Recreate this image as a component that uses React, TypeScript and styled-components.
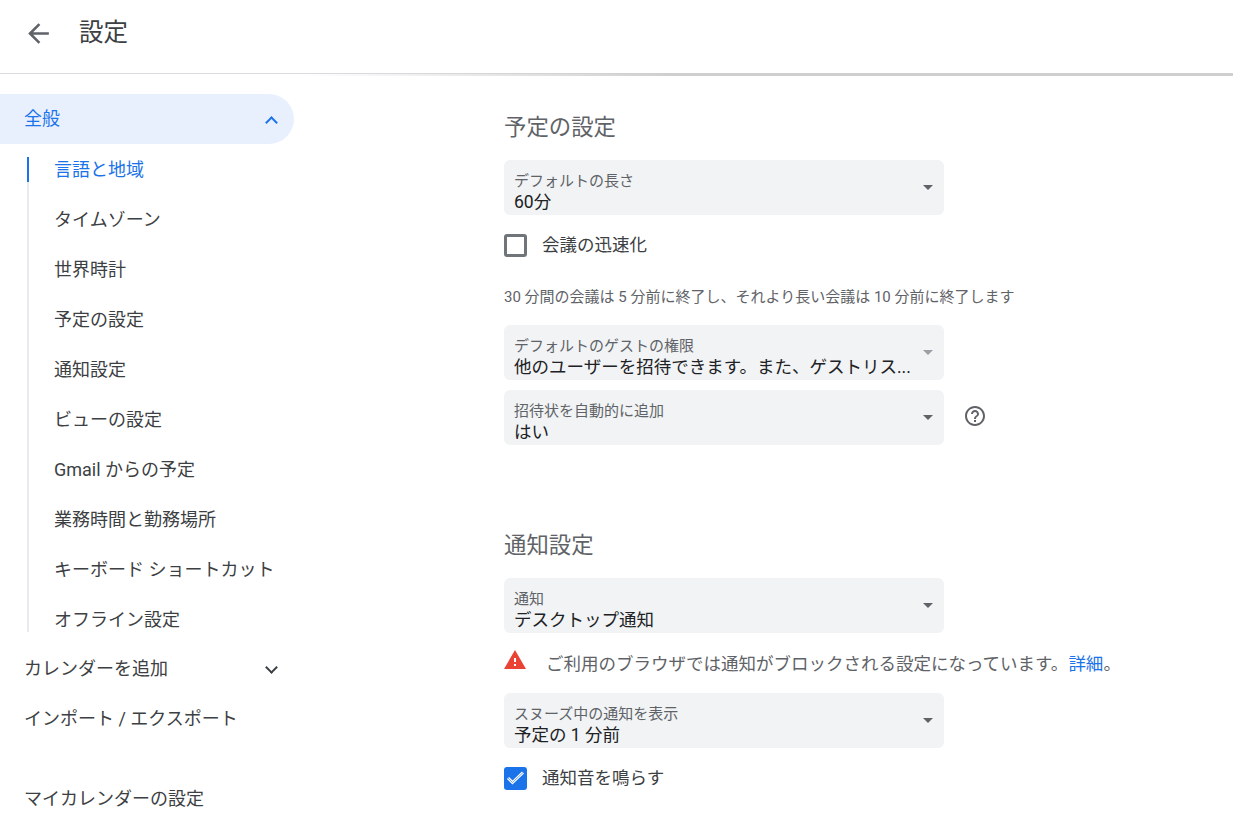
import React from 'react';
import styled, { createGlobalStyle } from 'styled-components';

const GlobalStyle = createGlobalStyle`
  html, body {
    margin: 0;
    padding: 0;
    background: #fff;
  }
  body {
    font-family: Roboto, "Noto Sans CJK JP", "Liberation Sans", sans-serif;
    color: #3c4043;
  }
  * {
    box-sizing: border-box;
  }
`;

const subItems = [
  '言語と地域',
  'タイムゾーン',
  '世界時計',
  '予定の設定',
  '通知設定',
  'ビューの設定',
  'Gmail からの予定',
  '業務時間と勤務場所',
  'キーボード ショートカット',
  'オフライン設定',
];

const App = () => {
  return (
    <Page>
      <GlobalStyle />
      <Header>
        <BackButton aria-label="戻る">
          <svg width="31" height="31" viewBox="0 0 24 24" fill="#5f6368">
            <path d="M20 11H7.83l5.59-5.59L12 4l-8 8 8 8 1.41-1.41L7.83 13H20v-2z" />
          </svg>
        </BackButton>
        <HeaderTitle>設定</HeaderTitle>
      </Header>
      <Body>
        <Sidebar>
          <NavItem $active>
            全般
            <Chevron $up $active />
          </NavItem>
          <SubList>
            {subItems.map((item, i) => (
              <SubItem key={item} $active={i === 0}>
                {item}
              </SubItem>
            ))}
          </SubList>
          <NavItem>
            カレンダーを追加
            <Chevron />
          </NavItem>
          <NavItem>インポート / エクスポート</NavItem>
          <NavHeading>マイカレンダーの設定</NavHeading>
        </Sidebar>
        <Main>
          <SectionTitle>予定の設定</SectionTitle>
          <Select label="デフォルトの長さ" value="60分" />
          <CheckRow>
            <CheckBox />
            <CheckLabel>会議の迅速化</CheckLabel>
          </CheckRow>
          <Hint>30 分間の会議は 5 分前に終了し、それより長い会議は 10 分前に終了します</Hint>
          <Select
            label="デフォルトのゲストの権限"
            value="他のユーザーを招待できます。また、ゲストリス..."
            muted
          />
          <SelectRow>
            <Select label="招待状を自動的に追加" value="はい" />
            <HelpIcon width="24" height="24" viewBox="0 0 24 24" fill="#5f6368">
              <path d="M11 18h2v-2h-2v2zm1-16C6.48 2 2 6.48 2 12s4.48 10 10 10 10-4.48 10-10S17.52 2 12 2zm0 18c-4.41 0-8-3.59-8-8s3.59-8 8-8 8 3.59 8 8-3.59 8-8 8zm0-14c-2.21 0-4 1.79-4 4h2c0-1.1.9-2 2-2s2 .9 2 2c0 2-3 1.75-3 5h2c0-2.25 3-2.5 3-5 0-2.21-1.79-4-4-4z" />
            </HelpIcon>
          </SelectRow>

          <SectionTitle $second>通知設定</SectionTitle>
          <Select label="通知" value="デスクトップ通知" />
          <WarningRow>
            <WarningIcon width="24" height="24" viewBox="0 0 24 24" fill="#ea4335">
              <path d="M1 21h22L12 2 1 21zm12-3h-2v-2h2v2zm0-4h-2v-4h2v4z" />
            </WarningIcon>
            <WarningText>
              ご利用のブラウザでは通知がブロックされる設定になっています。<DetailLink>詳細</DetailLink>。
            </WarningText>
          </WarningRow>
          <Select label="スヌーズ中の通知を表示" value="予定の 1 分前" />
          <CheckRow>
            <CheckBox $checked>
              <svg width="23" height="23" viewBox="0 0 23 23" fill="none" strokeLinejoin="miter">
                <path d="M4 11l4.5 4.5L19 5.5" stroke="#fff" strokeWidth="3" />
                <path d="M4 11l4.5 4.5L19 5.5" stroke="#6ea4ee" strokeWidth="1" />
              </svg>
            </CheckBox>
            <CheckLabel>通知音を鳴らす</CheckLabel>
          </CheckRow>
        </Main>
      </Body>
    </Page>
  );
};

const Select = ({ label, value, muted }: { label: string; value: string; muted?: boolean }) => (
  <SelectBox>
    <SelectText>
      <SelectLabel>{label}</SelectLabel>
      <SelectValue>{value}</SelectValue>
    </SelectText>
    <SelectArrow $muted={muted} />
  </SelectBox>
);

export default App;

const Page = styled.div`
  height: 814px;
  overflow: hidden;
`;

const Header = styled.header`
  position: relative;
  display: flex;
  align-items: center;
  height: 74px;
  padding: 0 0 7px 23px;
  border-bottom: 1px solid #dadce0;
  &::after {
    content: '';
    position: absolute;
    left: 300px;
    right: 0;
    top: 73px;
    height: 3px;
    background: linear-gradient(to right, rgba(205, 205, 205, 0), #cfcfcf 40%);
  }
`;

const BackButton = styled.div`
  display: flex;
  width: 31px;
  height: 31px;
`;

const HeaderTitle = styled.h1`
  margin: 0 0 0 25px;
  font-size: 24.5px;
  font-weight: 400;
  line-height: 32px;
  color: #3c4043;
`;

const Body = styled.div`
  display: flex;
`;

const Sidebar = styled.nav`
  flex: none;
  width: 294px;
  padding-top: 20px;
`;

const NavItem = styled.div<{ $active?: boolean }>`
  display: flex;
  align-items: center;
  justify-content: space-between;
  height: 50px;
  padding: 0 16px 5px 24px;
  border-radius: ${(p) => (p.$active ? '0 25px 25px 0' : '0')};
  background: ${(p) => (p.$active ? '#e8f0fe' : 'transparent')};
  color: ${(p) => (p.$active ? '#1a73e8' : '#3c4043')};
  font-size: 18px;
`;

const NavHeading = styled(NavItem)`
  margin-top: 30px;
`;

const Chevron = styled.span<{ $up?: boolean; $active?: boolean }>`
  width: 9px;
  height: 9px;
  margin: ${(p) => (p.$up ? '11px 2px 0 0' : '2px 2px 0 0')};
  border-style: solid;
  border-width: 0 2px 2px 0;
  border-color: ${(p) => (p.$active ? '#1a73e8' : '#3c4043')};
  transform: rotate(${(p) => (p.$up ? '-135deg' : '45deg')});
`;

const SubList = styled.div`
  display: flex;
  flex-direction: column;
  margin-left: 27px;
`;

const SubItem = styled.div<{ $active?: boolean }>`
  position: relative;
  display: flex;
  align-items: center;
  height: 50px;
  padding: 0 0 2px 25px;
  border-left: 2px solid #e8eaed;
  color: ${(p) => (p.$active ? '#1a73e8' : '#3c4043')};
  font-size: 18px;
  &:first-child {
    border-left-color: transparent;
  }
  &:first-child::before {
    content: '';
    position: absolute;
    left: -2px;
    top: 13px;
    bottom: 0;
    width: 2px;
    background: linear-gradient(to bottom, #1a73e8 25px, #e8eaed 25px);
  }
  &:last-child {
    height: 38px;
    margin-bottom: 12px;
    align-items: flex-start;
    padding: 13px 0 0 25px;
    line-height: 26px;
  }
`;

const Main = styled.main`
  flex: 1;
  min-width: 0;
  padding: 35px 0 0 210px;
`;

const SectionTitle = styled.h2<{ $second?: boolean }>`
  margin: ${(p) => (p.$second ? '82px 0 15px' : '0 0 15px')};
  font-size: 22.4px;
  font-weight: 400;
  line-height: 36px;
  color: #5f6368;
`;

const SelectBox = styled.div`
  display: flex;
  align-items: center;
  flex: none;
  width: 440px;
  height: 55px;
  padding: 0 11px 0 10px;
  border-radius: 6px;
  background: #f1f3f4;
`;

const SelectText = styled.div`
  flex: 1;
  min-width: 0;
  padding-top: 10px;
`;

const SelectLabel = styled.div`
  font-size: 15px;
  line-height: 19px;
  color: #5f6368;
`;

const SelectValue = styled.div`
  font-size: 17.5px;
  line-height: 22px;
  color: #202124;
  white-space: nowrap;
`;

const SelectArrow = styled.span<{ $muted?: boolean }>`
  flex: none;
  width: 0;
  height: 0;
  border-left: 5px solid transparent;
  border-right: 5px solid transparent;
  border-top: 5px solid ${(p) => (p.$muted ? '#9aa0a6' : '#5f6368')};
`;

const SelectRow = styled.div`
  display: flex;
  align-items: center;
  gap: 19px;
  margin-top: 10px;
`;

const HelpIcon = styled.svg`
  flex: none;
  margin-bottom: 3px;
`;

const CheckRow = styled.div`
  display: flex;
  align-items: center;
  height: 23px;
  margin-top: 19px;
`;

const CheckBox = styled.span<{ $checked?: boolean }>`
  display: flex;
  align-items: center;
  justify-content: center;
  width: 23px;
  height: 23px;
  border-radius: 3px;
  border: ${(p) => (p.$checked ? 'none' : '3px solid #70757a')};
  background: ${(p) => (p.$checked ? '#1a73e8' : '#fff')};
`;

const CheckLabel = styled.span`
  margin: 0 0 2px 15px;
  font-size: 17.5px;
  line-height: 24px;
  color: #3c4043;
`;

const Hint = styled.p`
  margin: 29px 0 17px;
  font-size: 15px;
  line-height: 22px;
  color: #5f6368;
  white-space: nowrap;
`;

const WarningRow = styled.div`
  display: flex;
  align-items: center;
  height: 24px;
  margin: 15px 0 21px;
`;

const WarningIcon = styled.svg`
  flex: none;
  margin-left: -1px;
`;

const WarningText = styled.span`
  margin: 8px 0 0 19px;
  font-size: 17.5px;
  line-height: 24px;
  color: #5f6368;
  white-space: nowrap;
`;

const DetailLink = styled.a`
  color: #1a73e8;
`;
